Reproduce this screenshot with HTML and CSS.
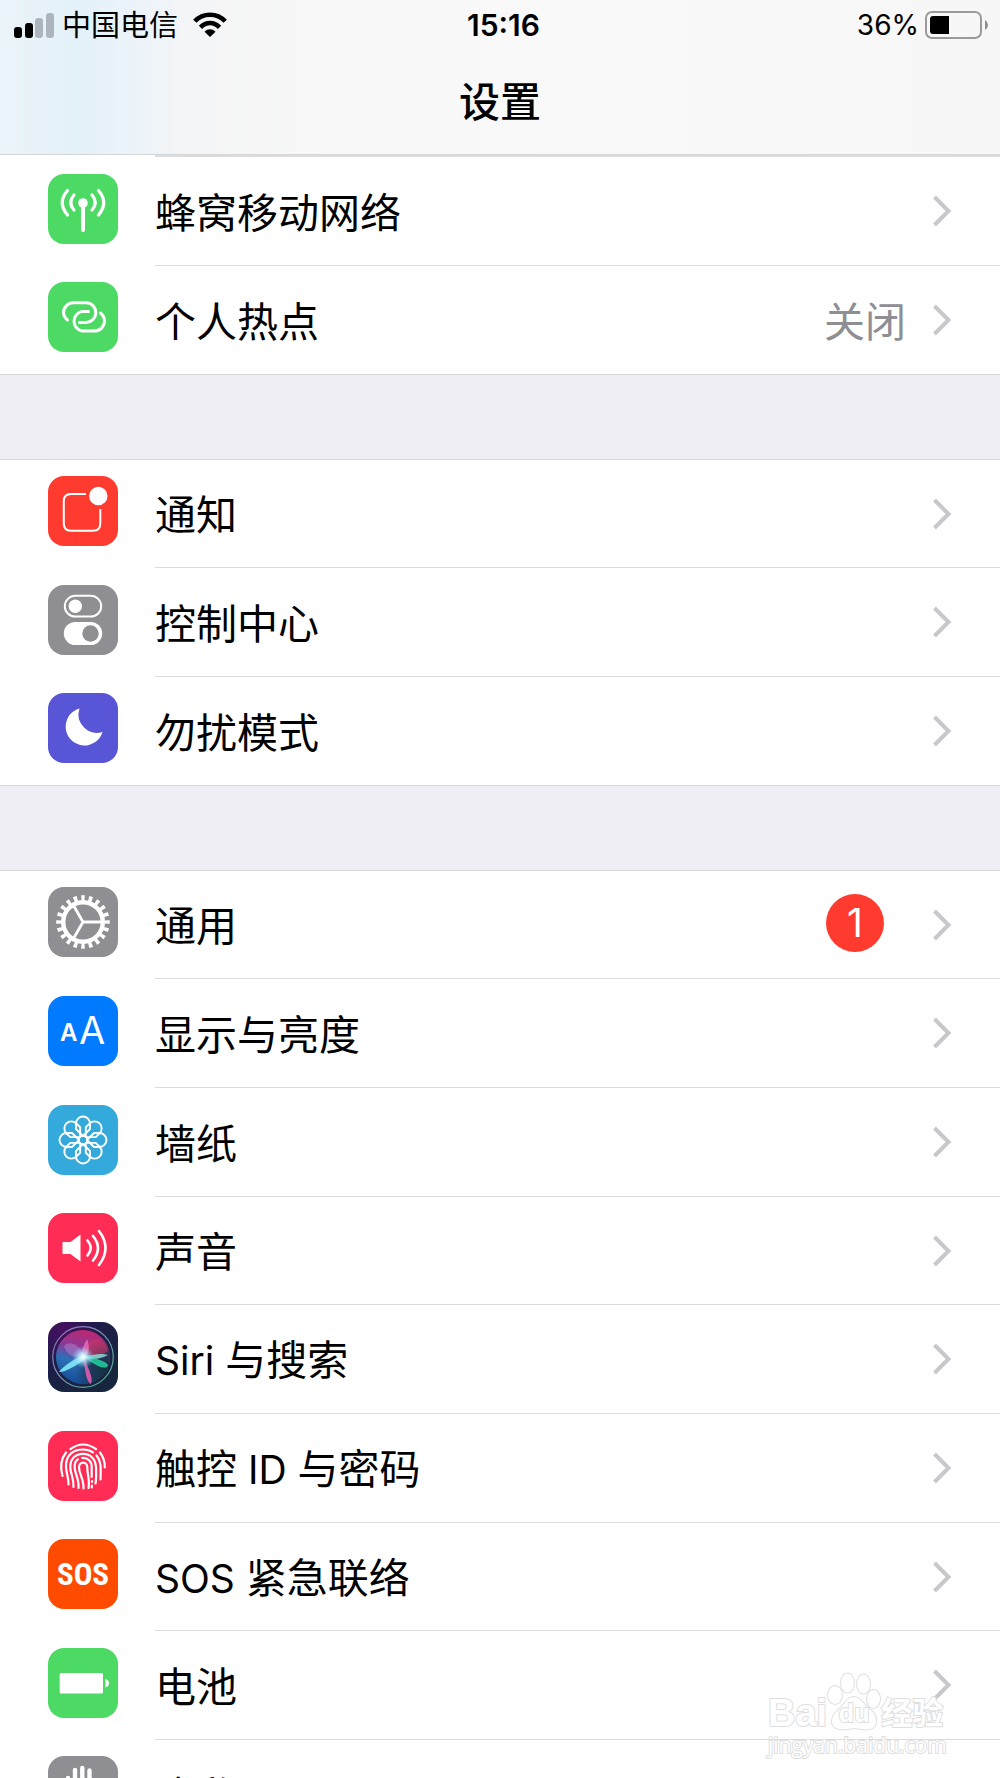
FILE: index.html
```html
<!DOCTYPE html>
<html lang="zh-CN">
<head>
<meta charset="utf-8">
<meta name="viewport" content="width=device-width, initial-scale=1">
<title>设置</title>
<link rel="stylesheet" href="styles.css">
</head>
<body>
<svg class="defs" width="0" height="0" aria-hidden="true">
  <defs>
    <symbol id="chevron" viewBox="0 0 20 32"><path d="M2.500 2 L16.500 16 L2.500 30" fill="none" stroke="#c7c7cc" stroke-width="4"/></symbol>
    <path id="petal" d="M35 31 L28 24 V18.500 A7 7 0 0 1 42 18.500 V24 Z"/>
    <radialGradient id="siri-bg" cx="0.2" cy="0.1" r="1"><stop offset="0" stop-color="#451060"/><stop offset="0.5" stop-color="#1e1c4a"/><stop offset="1" stop-color="#16263c"/></radialGradient>
    <linearGradient id="siri-orb" x1="0.6" y1="0" x2="0.35" y2="1"><stop offset="0" stop-color="#c0276f"/><stop offset="0.35" stop-color="#8a3a96"/><stop offset="0.6" stop-color="#2a70b8"/><stop offset="1" stop-color="#154a94"/></linearGradient>
    <radialGradient id="siri-shade" cx="0.95" cy="0.75" r="0.6"><stop offset="0" stop-color="#14313c"/><stop offset="0.5" stop-color="#1c3048" stop-opacity="0.85"/><stop offset="1" stop-color="#1c3048" stop-opacity="0"/></radialGradient>
    <linearGradient id="siri-ring" x1="0" y1="0" x2="1" y2="1"><stop offset="0" stop-color="#9a6ac0"/><stop offset="0.5" stop-color="#7a9ab0"/><stop offset="1" stop-color="#3fae90"/></linearGradient>
    <radialGradient id="siri-glow"><stop offset="0" stop-color="#fff"/><stop offset="0.35" stop-color="#c8f4ff" stop-opacity="0.8"/><stop offset="1" stop-color="#7cd0ff" stop-opacity="0"/></radialGradient>
  </defs>
</svg>

<header class="header">
  <div class="status">
    <div class="status-left">
      <svg class="signal" viewBox="0 0 40 26" aria-hidden="true"><rect x="0" y="15" width="8" height="11" rx="3"/><rect x="11" y="11" width="8" height="15" rx="3"/><rect x="21" y="6" width="8" height="20" rx="3" fill="#adb5bc"/><rect x="32" y="1" width="8" height="25" rx="3" fill="#adb5bc"/></svg>
      <span class="carrier">中国电信</span>
      <svg class="wifi" viewBox="0 0 34 26" aria-hidden="true"><g fill="none" stroke="#000" stroke-width="4.600"><path d="M1.800 9.300 C10 0.500 24 0.500 32.200 9.300"/><path d="M7.500 15.300 C13 9.500 21 9.500 26.500 15.300"/></g><path d="M11.500 19.800 C14.500 16.500 19.500 16.500 22.500 19.800 L17 25 Z"/></svg>
    </div>
    <time class="clock">15:16</time>
    <div class="status-right">
      <span>36%</span>
      <svg class="battery" viewBox="0 0 64 28" aria-hidden="true"><rect x="1" y="1" width="55" height="26" rx="6" fill="none" stroke="#9a9a9a" stroke-width="2"/><path d="M8 5 H24 V23 H8 Q5 23 5 20 V8 Q5 5 8 5Z"/><path d="M60 9 Q63 11 63 14 Q63 17 60 19Z" fill="#8c8c8c"/></svg>
    </div>
  </div>
  <h1 class="title">设置</h1>
</header>

<main class="list">
  <ul class="group group-joined">
    <li class="row"><a href="#cellular">
      <svg class="icon green" viewBox="0 0 70 70" aria-hidden="true"><g fill="none" stroke="#fff" stroke-width="3.200" stroke-linecap="round"><path d="M35 30 V56" stroke-width="4"/><path d="M26 21 Q19.500 28.500 26 36M44 21 Q50.500 28.500 44 36M19.500 16.500 Q9 28.500 19.500 41M50.500 16.500 Q61 28.500 50.500 41"/></g><circle cx="35" cy="29" r="4.800" fill="#fff"/></svg>
      <span class="body"><span class="label">蜂窝移动网络</span><svg class="chevron"><use href="#chevron"/></svg></span></a></li>
    <li class="row"><a href="#hotspot">
      <svg class="icon green" viewBox="0 0 70 70" aria-hidden="true"><g fill="none" stroke="#fff" stroke-width="3" stroke-linecap="round"><path d="M19.500 38 C16.500 35.500 15.500 33 15.500 30.500 A10 10 0 0 1 25.500 20.800 H38 a9.800 9.800 0 0 1 0 19.600 H31.500"/><path d="M52.500 31 C55.500 33.500 56.500 36 56.500 39 A10 10 0 0 1 46.500 49 H34 a10 10 0 0 1 0 -19.600 H40.500"/></g></svg>
      <span class="body"><span class="label">个人热点</span><span class="value">关闭</span><svg class="chevron"><use href="#chevron"/></svg></span></a></li>
  </ul>

  <ul class="group">
    <li class="row"><a href="#notifications">
      <svg class="icon red" viewBox="0 0 70 70" aria-hidden="true"><path d="M38 18 H23 Q15.800 18 15.800 25 V47.500 Q15.800 54.700 23 54.700 H45 Q52.300 54.700 52.300 47.500 V33" fill="none" stroke="#fff" stroke-width="2"/><circle cx="50.300" cy="20" r="9.200" fill="#fff"/></svg>
      <span class="body"><span class="label">通知</span><svg class="chevron"><use href="#chevron"/></svg></span></a></li>
    <li class="row"><a href="#control-center">
      <svg class="icon gray" viewBox="0 0 70 70" aria-hidden="true"><rect x="16.800" y="10.800" width="36.400" height="20.800" rx="10.400" fill="none" stroke="#fff" stroke-width="2"/><circle cx="27.300" cy="21.200" r="6.700" fill="#fff"/><rect x="15.800" y="37" width="38.400" height="23" rx="11.500" fill="#fff"/><circle cx="42.500" cy="48.500" r="8.200" fill="#8e8e93"/></svg>
      <span class="body"><span class="label">控制中心</span><svg class="chevron"><use href="#chevron"/></svg></span></a></li>
    <li class="row"><a href="#do-not-disturb">
      <svg class="icon indigo" viewBox="0 0 70 70" aria-hidden="true"><path d="M31.500 15.500 A18.800 18.800 0 1 0 54.500 39 A18.500 18.500 0 0 1 31.500 15.500Z" fill="#fff"/></svg>
      <span class="body"><span class="label">勿扰模式</span><svg class="chevron"><use href="#chevron"/></svg></span></a></li>
  </ul>

  <ul class="group">
    <li class="row"><a href="#general">
      <svg class="icon gray" viewBox="0 0 70 70" aria-hidden="true"><g fill="none" stroke="#fff"><circle cx="35" cy="35" r="19.800" stroke-width="4.400"/><circle cx="35" cy="35" r="24" stroke-width="5.600" pathLength="200" stroke-dasharray="4.600 5.400" stroke-dashoffset="2.300"/><path d="M35 35 H54M35 35 L25.500 18.500M35 35 L25.500 51.500" stroke-width="2.800"/></g></svg>
      <span class="body"><span class="label">通用</span><span class="badge">1</span><svg class="chevron"><use href="#chevron"/></svg></span></a></li>
    <li class="row"><a href="#display">
      <svg class="icon blue" viewBox="0 0 70 70" aria-hidden="true"><text class="glyph-small" x="12" y="45">A</text><text class="glyph-large" x="31" y="48">A</text></svg>
      <span class="body"><span class="label">显示与亮度</span><svg class="chevron"><use href="#chevron"/></svg></span></a></li>
    <li class="row"><a href="#wallpaper">
      <svg class="icon sky" viewBox="0 0 70 70" aria-hidden="true"><g fill="none" stroke="#fff" stroke-width="1.900" stroke-linejoin="round"><circle cx="35" cy="35" r="4.300"/><use href="#petal"/><use href="#petal" transform="rotate(45 35 35)"/><use href="#petal" transform="rotate(90 35 35)"/><use href="#petal" transform="rotate(135 35 35)"/><use href="#petal" transform="rotate(180 35 35)"/><use href="#petal" transform="rotate(225 35 35)"/><use href="#petal" transform="rotate(270 35 35)"/><use href="#petal" transform="rotate(315 35 35)"/></g></svg>
      <span class="body"><span class="label">墙纸</span><svg class="chevron"><use href="#chevron"/></svg></span></a></li>
    <li class="row"><a href="#sounds">
      <svg class="icon pink" viewBox="0 0 70 70" aria-hidden="true"><path d="M14.500 29 H22.500 L32.500 21.500 V48.500 L22.500 41 H14.500Z" fill="#fff"/><g fill="none" stroke="#fff" stroke-width="2.600" stroke-linecap="round"><path d="M39.500 27.500 Q46 35 39.500 42.500M45 23 Q55 35 45 47.500M51 18 Q64 35 51 52"/></g></svg>
      <span class="body"><span class="label">声音</span><svg class="chevron"><use href="#chevron"/></svg></span></a></li>
    <li class="row"><a href="#siri">
      <svg class="icon" viewBox="0 0 70 70" aria-hidden="true"><rect width="70" height="70" fill="url(#siri-bg)"/><circle cx="35" cy="35" r="27" fill="url(#siri-orb)"/><circle cx="35" cy="35" r="27" fill="url(#siri-shade)"/><path d="M36 34 C38 17 50 13 57 22 C64 31 56 34 36 34Z" fill="#d33660" opacity="0.55"/><path d="M36 34 C31 20 20 19 16 24 C20 35 28 37 36 34Z" fill="#b88ad8" opacity="0.45"/><path d="M33 35 C34 24 38 20 39 17 C42 24 41 29 38 36Z" fill="#f06ab8" opacity="0.8"/><path d="M36 35 C45 35 58 39 60 43 C59 48 50 46 36 35Z" fill="#22c99a" opacity="0.9"/><path d="M34 34 C45 34 52 30 60 33 C52 38 42 37 34 36Z" fill="#8ee8e0" opacity="0.8"/><path d="M35 34 C38 42 46 55 43 62 C38 60 37 46 35 34Z" fill="#e05cae" opacity="0.9"/><path d="M37 32 C27 36 14 45 11 50 C15 51 29 44 38 36Z" fill="#7de3f4" opacity="0.95"/><circle cx="35" cy="35" r="11" fill="url(#siri-glow)"/><circle cx="35" cy="35" r="30.300" fill="none" stroke="url(#siri-ring)" stroke-width="1.200"/></svg>
      <span class="body"><span class="label"><span class="latin">Siri </span>与搜索</span><svg class="chevron"><use href="#chevron"/></svg></span></a></li>
    <li class="row"><a href="#touch-id">
      <svg class="icon pink" viewBox="0 0 70 70" aria-hidden="true"><g fill="none" stroke="#fff" stroke-width="2.200" stroke-linecap="round"><path d="M22.500 18 Q35 9 48 18"/><path d="M18 21.500 Q10.500 31 14.500 45"/><path d="M52 21.500 Q57 28 56.800 36.500"/><path d="M20.500 53.500 C20.500 45 18 42 18 35 C18 24 25 18.500 35 18.500 C39 18.500 42.500 19.500 45 21.300"/><path d="M48.500 24.500 C53.500 30 52.800 38 52.500 48.500"/><path d="M25.500 56 C26 47 22.300 43 22.300 36 C22.300 27 28 22.800 35 22.800 C42.500 22.800 47.500 28 48 36 C48.300 43 48.500 47 47.500 52.500"/><path d="M30.500 57 C31.500 48 26.600 43 26.600 36 C26.600 32 28 29.500 30 28.300M34 27 C40 26.500 43.700 30.500 43.700 36 V46"/><path d="M35.500 57.500 C36 48 31 43 31 36.500 C31 30 39.300 30 39.300 36.500 C39.300 44 42 49 40.500 57"/><path d="M44 50 V51M44 54.500 L43.700 56.500"/></g></svg>
      <span class="body"><span class="label">触控<span class="latin"> ID </span>与密码</span><svg class="chevron"><use href="#chevron"/></svg></span></a></li>
    <li class="row"><a href="#sos">
      <svg class="icon orange" viewBox="0 0 70 70" aria-hidden="true"><text class="glyph-sos" x="35" y="46" text-anchor="middle">SOS</text></svg>
      <span class="body"><span class="label"><span class="latin">SOS </span>紧急联络</span><svg class="chevron"><use href="#chevron"/></svg></span></a></li>
    <li class="row"><a href="#battery">
      <svg class="icon green" viewBox="0 0 70 70" aria-hidden="true"><rect x="11.700" y="25" width="43.300" height="20.500" rx="1.500" fill="#fff"/><path d="M57.500 31 Q61 32 61 35.300 Q61 38.500 57.500 39.500Z" fill="#fff"/></svg>
      <span class="body"><span class="label">电池</span><svg class="chevron"><use href="#chevron"/></svg></span></a></li>
    <li class="row"><a href="#privacy">
      <svg class="icon gray" viewBox="0 0 70 70" aria-hidden="true"><g fill="none" stroke="#fff" stroke-width="4.400" stroke-linecap="round"><path d="M20 22 V40M27 14 V36M34.300 12 V36M41.500 14.500 V36M52 32 L44 46"/></g><path d="M18 34 H44 V46 L40 58 H25 L18 46Z" fill="#fff"/></svg>
      <span class="body"><span class="label">隐私</span><svg class="chevron"><use href="#chevron"/></svg></span></a></li>
  </ul>
</main>

<aside class="watermark">
  <div class="brand">
    <span class="brand-latin">Bai</span>
    <span class="paw"><svg viewBox="0 0 54 60" aria-hidden="true"><g fill="#fff" stroke="#dfdfdf" stroke-width="2"><ellipse cx="8" cy="23" rx="7" ry="9"/><ellipse cx="20.500" cy="11" rx="6.500" ry="9.500"/><ellipse cx="36.500" cy="12" rx="6.500" ry="9.500"/><ellipse cx="46.500" cy="27" rx="6.500" ry="9"/><path d="M27 25 C32 25 36 31 40 35 C46 40 50 43 49 50 C48 58 40 58 34 57 C30 56 24 56 20 57 C12 58 5 57 5 49 C5 42 11 39 15 34 C19 30 21 25 27 25Z"/></g></svg><span class="paw-text">du</span></span>
    <span class="brand-han">经验</span>
  </div>
  <div class="domain">jingyan.baidu.com</div>
</aside>
</body>
</html>
```
FILE: styles.css
```css
* {
  box-sizing: border-box;
}

body {
  position: relative;
  display: flex;
  flex-direction: column;
  height: 100vh;
  margin: 0;
  overflow: hidden;
  background: #efeef4;
  color: #000;
  font-family: Inter, "Noto Sans CJK SC", sans-serif;
  font-size: 41px;
  line-height: 60px;
}

.defs {
  position: absolute;
}

/* Navigation bar */
.header {
  flex: none;
  height: 155px;
  border-bottom: 1px solid #d6d6d8;
  background: linear-gradient(90deg, #ebf4f9 0, #e3f1f8 76px, #ebf3fa 130px, #f4f5f6 190px, #f8f8f8 320px, #f9f9f9 60%, #f7f7f7 100%);
}

.status {
  display: grid;
  grid-template-columns: 1fr auto 1fr;
  align-items: center;
  height: 48px;
  padding: 0 11px 0 14px;
  font-size: 29px;
  line-height: 48px;
}

.status-left,
.status-right {
  display: flex;
  align-items: center;
}

.status-right {
  justify-content: flex-end;
  gap: 6px;
  font-size: 28px;
}

.signal {
  width: 40px;
  height: 26px;
  margin-right: 8px;
}

.wifi {
  width: 34px;
  height: 26px;
  margin-left: 15px;
}

.battery {
  width: 64px;
  height: 28px;
}

.carrier {
  padding-top: 2px;
}

.clock {
  padding-left: 4px;
  font-size: 30px;
  font-weight: 600;
}

.title {
  margin: 0;
  font-size: 41px;
  font-weight: 500;
  line-height: 108px;
  text-align: center;
}

/* Settings list */
.list {
  flex: 1;
  min-height: 0;
  overflow-y: auto;
  scrollbar-width: none;
}

.group {
  margin: 0 0 84px;
  padding: 0;
  border: solid #d8d7dc;
  border-width: 1px 0;
  background: #fff;
  list-style: none;
}

.group-joined {
  border-top: 0;
}

.group-joined::before {
  content: "";
  display: block;
  height: 2px;
  margin-left: 155px;
  background: #dcdcde;
}

.row {
  height: 109px;
}

.row:nth-child(3n + 1),
.row:last-child {
  height: 108px;
}

.group-joined .row:first-child {
  height: 109px;
}

.row a {
  display: flex;
  align-items: center;
  height: 100%;
  padding-left: 48px;
  color: inherit;
  text-decoration: none;
}

.icon {
  flex: none;
  width: 70px;
  height: 70px;
  margin: 0 37px 6px 0;
  border-radius: 16px;
}

.green { background: #4cd964; }
.red { background: #ff3b30; }
.gray { background: #8e8e93; }
.indigo { background: #5856d6; }
.blue { background: #007aff; }
.sky { background: #34aadc; }
.pink { background: #ff2d55; }
.orange { background: #ff4b00; }

.body {
  display: flex;
  flex: 1;
  align-items: center;
  height: 100%;
  padding-right: 48px;
  border-bottom: 1px solid #dcdcde;
}

.row:last-child .body {
  border-bottom: 0;
}

.label,
.value {
  padding-top: 3px;
}

.label {
  flex: 1;
}

.latin {
  font-size: 39px;
}

.value {
  margin-right: 26px;
  color: #8e8e93;
}

.badge {
  width: 58px;
  height: 58px;
  margin: 0 48px 4px 0;
  border-radius: 50%;
  background: #ff3b30;
  color: #fff;
  font-size: 39px;
  line-height: 58px;
  text-align: center;
}

.chevron {
  width: 20px;
  height: 32px;
}

.glyph-small,
.glyph-large,
.glyph-sos {
  fill: #fff;
}

.glyph-small {
  font-size: 24px;
  font-weight: 600;
}

.glyph-large {
  font-size: 38px;
}

.glyph-sos {
  font-family: "Roboto Condensed", "Open Sans Condensed", Roboto, sans-serif;
  font-size: 31px;
  font-weight: 700;
}

/* Watermark over the list */
.watermark {
  position: absolute;
  right: 54px;
  bottom: 20px;
  width: 178px;
  color: #fff;
  white-space: nowrap;
  pointer-events: none;
  -webkit-text-stroke: 2px #dedede;
  paint-order: stroke fill;
}

.brand {
  display: flex;
  align-items: flex-end;
  height: 62px;
  font-size: 38px;
  font-weight: 700;
  line-height: 38px;
}

.brand-latin {
  font-family: "Liberation Sans", sans-serif;
}

.brand-han {
  font-size: 31px;
}

.paw {
  display: grid;
  flex: none;
  width: 54px;
}

.paw svg,
.paw-text {
  grid-area: 1 / 1;
}

.paw-text {
  align-self: end;
  font-family: "Liberation Sans", sans-serif;
  font-size: 25px;
  text-align: center;
}

.domain {
  font-family: "Open Sans", sans-serif;
  font-size: 21px;
  line-height: 26px;
}
```
